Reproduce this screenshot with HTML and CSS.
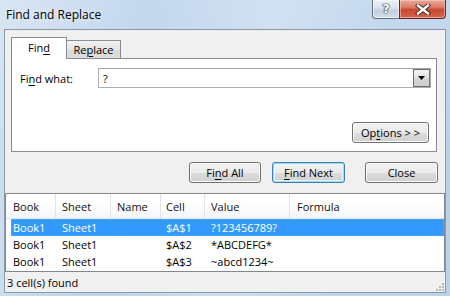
FILE: index.html
```html
<!DOCTYPE html>
<html>
<head>
<meta charset="utf-8">
<link rel="stylesheet" href="styles.css">
</head>
<body>
<div class="window">
  <div class="titlebar">
    <span class="title">Find and Replace</span>
    <div class="caption-btns">
      <div class="cbtn help"><span class="qmark">?</span></div>
      <div class="cbtn close">
        <svg width="16" height="11" viewBox="0 0 16 11">
          <path d="M3 1.5 L13 9.5 M13 1.5 L3 9.5" stroke="#3a2420" stroke-width="4.2" stroke-linecap="square"/>
          <path d="M3 1.5 L13 9.5 M13 1.5 L3 9.5" stroke="#ffffff" stroke-width="2.4" stroke-linecap="square"/>
        </svg>
      </div>
    </div>
  </div>
  <div class="client">
    <div class="top">
      <div class="tabs">
        <div class="tab active">Fin<u>d</u></div>
        <div class="tab">Re<u>p</u>lace</div>
      </div>
      <div class="panel">
        <div class="find-row">
          <label class="label">Fi<u>n</u>d what:</label>
          <div class="combo">
            <span class="combo-text">?</span>
            <div class="combo-btn">
              <svg width="7" height="4" viewBox="0 0 7 4"><path d="M0 0 H7 L3.5 4 Z" fill="#000"/></svg>
            </div>
          </div>
        </div>
        <button class="btn options">Op<u>t</u>ions &gt; &gt;</button>
      </div>
      <div class="actions">
        <button class="btn find-all">Fi<u>n</u>d All</button>
        <button class="btn default find-next"><u>F</u>ind Next</button>
        <button class="btn close-btn">Close</button>
      </div>
    </div>
    <div class="results">
      <div class="header">
        <div class="hc">Book</div>
        <div class="hc">Sheet</div>
        <div class="hc">Name</div>
        <div class="hc">Cell</div>
        <div class="hc">Value</div>
        <div class="hc last">Formula</div>
      </div>
      <div class="row selected">
        <div class="c c1">Book1</div><div class="c">Sheet1</div><div class="c"></div><div class="c cc">$A$1</div><div class="c">?123456789?</div><div class="c"></div>
      </div>
      <div class="row">
        <div class="c c1">Book1</div><div class="c">Sheet1</div><div class="c"></div><div class="c cc">$A$2</div><div class="c">*ABCDEFG*</div><div class="c"></div>
      </div>
      <div class="row">
        <div class="c c1">Book1</div><div class="c">Sheet1</div><div class="c"></div><div class="c cc">$A$3</div><div class="c">~abcd1234~</div><div class="c"></div>
      </div>
    </div>
    <div class="status">
      <span>3 cell(s) found</span>
      <svg class="grip" width="9" height="9" viewBox="0 0 9 9">
        <g fill="#b8b8b8">
          <rect x="7" y="1" width="2" height="2"/>
          <rect x="4" y="4" width="2" height="2"/><rect x="7" y="4" width="2" height="2"/>
          <rect x="1" y="7" width="2" height="2"/><rect x="4" y="7" width="2" height="2"/><rect x="7" y="7" width="2" height="2"/>
        </g>
      </svg>
    </div>
  </div>
</div>
</body>
</html>
```
FILE: styles.css
```css
* { box-sizing: border-box; }
html, body { margin: 0; padding: 0; }
body {
  width: 450px;
  height: 296px;
  overflow: hidden;
  font-family: "Open Sans", "Noto Sans", sans-serif;
  font-size: 11px;
  color: #000;
}
u { text-decoration: underline; text-underline-offset: 2px; }

.window {
  width: 450px;
  height: 296px;
  display: flex;
  flex-direction: column;
  padding: 0 4px 3px 4px;
  background:
    linear-gradient(100deg, rgba(255,255,255,0.35) 0%, rgba(255,255,255,0) 30%, rgba(255,255,255,0.25) 55%, rgba(255,255,255,0) 80%),
    linear-gradient(#c4d8ee, #b9d0ea 60%, #bcd3ec);
}

.titlebar {
  height: 29px;
  display: flex;
  justify-content: space-between;
  align-items: flex-start;
}
.title {
  font-size: 12px;
  margin: 6px 0 0 2px;
  color: #000;
  text-shadow: 0 0 6px rgba(255,255,255,0.9);
}
.caption-btns { display: flex; }
.cbtn {
  height: 19px;
  display: flex;
  align-items: center;
  justify-content: center;
  border: 1px solid #5f6f83;
  border-top: none;
}
.help {
  width: 28px;
  border-radius: 0 0 0 4px;
  background: linear-gradient(#e9eff6 0%, #d9e3ee 45%, #c3d0de 55%, #cfdbe8 100%);
  box-shadow: inset 0 0 0 1px rgba(255,255,255,0.6);
}
.qmark {
  font-family: "DejaVu Sans", sans-serif;
  font-weight: bold;
  font-size: 13px;
  color: #fff;
  line-height: 1;
  margin-top: -1px;
  text-shadow: 0 0 1px #2e3a48, 0 0 1px #2e3a48, 0 0 1px #2e3a48, 0 0 1px #2e3a48;
}
.close {
  width: 47px;
  margin-left: -1px;
  border-color: #5a2a24;
  border-radius: 0 0 4px 0;
  background: linear-gradient(#e9a898 0%, #dc7c66 40%, #c8452c 55%, #d2684e 100%);
  box-shadow: inset 0 0 0 1px rgba(255,220,210,0.5);
}

.client {
  flex: 1;
  background: #f0f0f0;
  border: 1px solid #8a98aa;
  display: flex;
  flex-direction: column;
}

.top { padding: 7px 8px 0 6px; }
.tabs {
  display: flex;
  align-items: flex-end;
  height: 21px;
}
.tab {
  height: 18px;
  border: 1px solid #898c95;
  border-bottom: none;
  display: flex;
  align-items: center;
  justify-content: center;
  background: linear-gradient(#f2f2f2, #e5e5e5 50%, #d8d8d8 51%, #dcdcdc);
}
.tab.active {
  width: 56px;
  height: 22px;
  margin-bottom: -1px;
  background: #fff;
  position: relative;
  z-index: 1;
  padding-bottom: 2px;
}
.tab:not(.active) {
  width: 55px;
  margin-left: -1px;
}

.panel {
  height: 94px;
  background: #fff;
  border: 1px solid #898c95;
  padding: 9px 5px 8px 8px;
  display: flex;
  flex-direction: column;
  justify-content: space-between;
}
.find-row {
  display: flex;
  align-items: center;
}
.label { width: 78px; }
.combo {
  flex: 1;
  height: 20px;
  border: 1px solid #abadb3;
  border-top-color: #a0a3aa;
  display: flex;
  align-items: center;
  justify-content: space-between;
  background: #fff;
}
.combo-text { padding-left: 4px; }
.combo-btn {
  width: 17px;
  height: 18px;
  border: 1px solid #707070;
  background: linear-gradient(#f2f2f2, #e3e3e3 50%, #d5d5d5 51%, #cfcfcf);
  display: flex;
  align-items: center;
  justify-content: center;
}

.btn {
  font-family: inherit;
  font-size: 11px;
  color: #000;
  height: 21px;
  padding: 0;
  border: 1px solid #707070;
  border-radius: 3px;
  background: linear-gradient(#f2f2f2 0%, #ebebeb 50%, #dddddd 51%, #cfcfcf 100%);
  box-shadow: inset 0 0 0 1px #fcfcfc;
}
.options {
  align-self: flex-end;
  width: 77px;
  margin-right: 2px;
}
.actions {
  display: flex;
  justify-content: flex-end;
  margin-top: 10px;
  margin-right: -1px;
}
.find-all { width: 72px; }
.find-next { width: 73px; margin-left: 11px; }
.close-btn { width: 73px; margin-left: 20px; }
.btn.default {
  border-color: #3c7fb1;
  box-shadow: inset 0 0 0 1px #9fdcf8, inset 0 0 0 2px #e4f5fd;
}

.results {
  margin-top: 10px;
  height: 79px;
  background: #fff;
  border: 1px solid #828790;
}
.header {
  display: grid;
  grid-template-columns: 50px 55px 50px 44px 85px 1fr;
  height: 25px;
  border-bottom: 1px solid #e5e5e5;
  background: linear-gradient(#ffffff, #ffffff 40%, #f4f5f7);
}
.hc {
  border-right: 1px solid #e3e5e8;
  padding-left: 6px;
  display: flex;
  align-items: center;
  color: #111;
}
.hc:first-child { padding-left: 7px; }
.hc:nth-child(4) { padding-left: 5px; }
.hc.last { border-right: none; padding-left: 7px; }

.row {
  display: grid;
  grid-template-columns: 45px 55px 50px 44px 85px 1fr;
  height: 17px;
  margin-left: 5px;
  align-items: center;
  border: 1px solid transparent;
}
.c { padding-left: 5px; white-space: nowrap; }
.c1 { padding-left: 1px; }
.cc { padding-left: 4px; }
.row.selected {
  background: #3399ff;
  color: #fff;
  border: 1px dotted #e0912f;
}

.status {
  flex: 1;
  display: flex;
  align-items: center;
  justify-content: space-between;
  padding: 0 1px 0 2px;
  position: relative;
}
.grip { align-self: flex-end; margin-bottom: 1px; }
```
